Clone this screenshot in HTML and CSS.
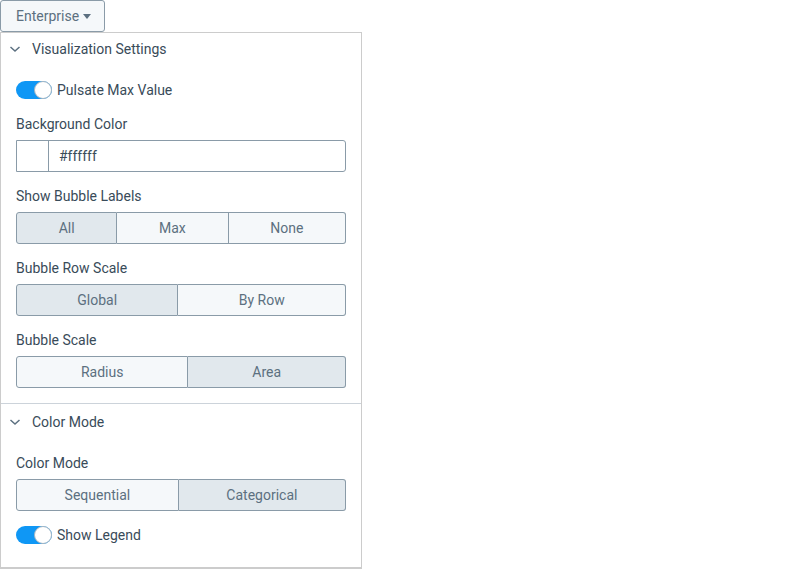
FILE: index.html
```html
<!DOCTYPE html>
<html>
<head>
<meta charset="utf-8">
<link rel="stylesheet" href="styles.css">
</head>
<body>
<div class="page">
  <button class="menu-btn">Enterprise<span class="caret"></span></button>
  <div class="panel">
    <section class="section">
      <div class="section-header">
        <svg class="chevron" width="12" height="8" viewBox="0 0 12 8"><path d="M1.5 2 L6 6 L10.5 2" fill="none" stroke="#5c7080" stroke-width="1.5"/></svg>
        <span>Visualization Settings</span>
      </div>
      <div class="section-body">
        <div class="switch-row"><span class="switch on"><span class="knob"></span></span><span>Pulsate Max Value</span></div>
        <div class="field after-switch">
          <div class="field-label">Background Color</div>
          <div class="color-input"><span class="swatch"></span><span class="color-value">#ffffff</span></div>
        </div>
        <div class="field">
          <div class="field-label">Show Bubble Labels</div>
          <div class="seg">
            <button class="seg-btn active">All</button>
            <button class="seg-btn">Max</button>
            <button class="seg-btn">None</button>
          </div>
        </div>
        <div class="field">
          <div class="field-label">Bubble Row Scale</div>
          <div class="seg">
            <button class="seg-btn active">Global</button>
            <button class="seg-btn">By Row</button>
          </div>
        </div>
        <div class="field">
          <div class="field-label">Bubble Scale</div>
          <div class="seg">
            <button class="seg-btn">Radius</button>
            <button class="seg-btn active">Area</button>
          </div>
        </div>
      </div>
    </section>
    <section class="section second">
      <div class="section-header">
        <svg class="chevron" width="12" height="8" viewBox="0 0 12 8"><path d="M1.5 2 L6 6 L10.5 2" fill="none" stroke="#5c7080" stroke-width="1.5"/></svg>
        <span>Color Mode</span>
      </div>
      <div class="section-body">
        <div class="field first">
          <div class="field-label">Color Mode</div>
          <div class="seg">
            <button class="seg-btn">Sequential</button>
            <button class="seg-btn active">Categorical</button>
          </div>
        </div>
        <div class="switch-row legend"><span class="switch on"><span class="knob"></span></span><span>Show Legend</span></div>
      </div>
    </section>
  </div>
</div>
</body>
</html>
```

FILE: styles.css
```css
* { box-sizing: border-box; }
body {
  margin: 0;
  background: #fff;
  font-family: Roboto, "Liberation Sans", sans-serif;
  font-size: 14px;
  color: #394b59;
}
.page { width: 800px; }
.menu-btn {
  display: flex;
  align-items: center;
  height: 32px;
  width: 105px;
  padding: 0 0 0 15px;
  margin: 0;
  border: 1px solid #8a9ba8;
  border-radius: 3px;
  background: #f5f8fa;
  color: #5c7080;
  font-family: inherit;
  font-size: 14px;
}
.caret {
  display: inline-block;
  margin-left: 4px;
  width: 0; height: 0;
  border-left: 4px solid transparent;
  border-right: 4px solid transparent;
  border-top: 5px solid #5c7080;
}
.panel {
  width: 362px;
  border: 1px solid #ccc;
  border-bottom-width: 2px;
}
.section + .section { border-top: 1px solid #ccd3da; }
.section-header {
  display: flex;
  align-items: center;
  height: 32px;
  padding-left: 8px;
  gap: 11px;
  color: #394b59;
}
.second .section-header { height: 36px; padding-bottom: 1px; }
.section-body { padding: 16px 15px 15px 15px; }
.second .section-body { padding-top: 14px; padding-bottom: 23px; }
.switch-row {
  display: flex;
  align-items: center;
  gap: 5px;
  height: 18px;
}
.switch-row.legend { margin-top: 15px; }
.switch {
  position: relative;
  display: inline-block;
  width: 36px;
  height: 18px;
  border-radius: 9px;
  background: #e1e8ed;
}
.switch.on { background: #0f97f5; }
.knob {
  position: absolute;
  top: 0;
  right: 0;
  width: 18px;
  height: 18px;
  border-radius: 50%;
  background: #fff;
  border: 1px solid #a7b6c2;
}
.field { margin-top: 15px; }
.field.after-switch { margin-top: 16px; }
.field.first { margin-top: 0; }
.field-label {
  line-height: 18px;
  margin-bottom: 7px;
  color: #394b59;
}
.color-input {
  display: flex;
  height: 32px;
  border: 1px solid #8a9ba8;
  border-radius: 0 3px 3px 0;
  background: #fff;
}
.swatch {
  width: 32px;
  border-right: 1px solid #8a9ba8;
  background: #fff;
}
.color-value {
  display: flex;
  align-items: center;
  padding-left: 10px;
  color: #394b59;
}
.seg {
  display: flex;
  height: 32px;
}
.seg-btn {
  flex: 1 1 auto;
  margin: 0;
  padding: 0 10px;
  border: 1px solid #8a9ba8;
  background: #f5f8fa;
  color: #5c7080;
  font-family: inherit;
  font-size: 14px;
}
.seg-btn + .seg-btn { border-left: none; }
.seg-btn:first-child { border-radius: 3px 0 0 3px; }
.seg-btn:last-child { border-radius: 0 3px 3px 0; }
.seg-btn.active { background: #e1e8ed; }
```
